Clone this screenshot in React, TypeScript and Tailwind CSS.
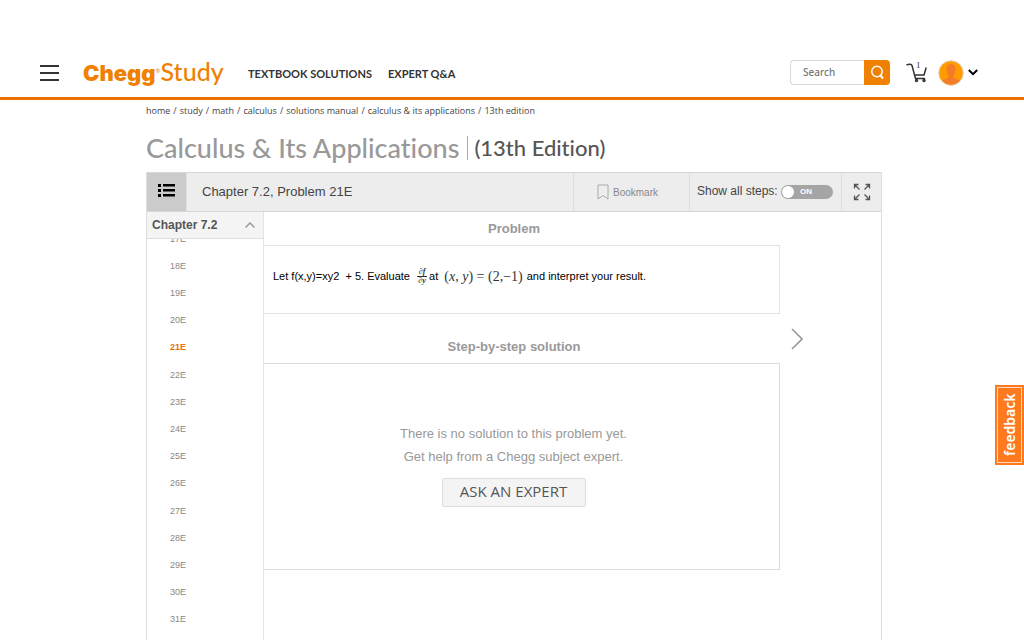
import React from "react";

const breadcrumbs = [
  "home",
  "study",
  "math",
  "calculus",
  "solutions manual",
  "calculus & its applications",
  "13th edition",
];

const problems = [
  "17E", "18E", "19E", "20E", "21E", "22E", "23E", "24E",
  "25E", "26E", "27E", "28E", "29E", "30E", "31E",
];

const CartIcon = () => (
  <svg width="22" height="20" viewBox="0 0 22 20" fill="none" stroke="#333" strokeWidth="1.5">
    <path d="M1 1.8C3 1 5.5 1 6 2.5L9.5 15.5H18.5M9 12H18L20 5" strokeLinejoin="round" strokeLinecap="round" />
    <circle cx="10.5" cy="17.5" r="1" />
    <circle cx="18" cy="17.5" r="1" />
  </svg>
);

const Avatar = () => (
  <svg width="26" height="26" viewBox="0 0 26 26">
    <circle cx="13" cy="13" r="12.3" fill="#ff9c00" stroke="#e3d3c0" strokeWidth="1" />
    <path
      d="M13 4C9.8 4 8.2 6.2 8.4 9.4C8.5 12 9.3 14.3 10.7 15.6V17.5C9.5 18.8 6 18.7 4 20.6A12 12 0 0 0 22 20.6C20 18.7 16.5 18.8 15.3 17.5V15.6C16.7 14.3 17.5 12 17.6 9.4C17.8 6.2 16.2 4 13 4Z"
      fill="#f47c28"
    />
  </svg>
);

const Header: React.FC = () => (
  <header className="flex h-[100px] shrink-0 items-center border-b-[3px] border-[#eb7100] pt-12 pr-[46px] pl-10 font-['Lato',sans-serif]">
    <button aria-label="Menu" className="mr-6">
      <svg width="19" height="18" viewBox="0 0 19 18" stroke="#333" strokeWidth="2">
        <path d="M0 2H19M0 9H19M0 16H19" />
      </svg>
    </button>
    <a href="#" className="flex w-[165px] items-baseline pb-0.5 leading-8 text-[#f08000]">
      <span className="font-['Inter',sans-serif] text-[22px] font-black">Chegg</span>
      <span className="self-start text-[6px]">®</span>
      <span className="text-[25px] font-medium">Study</span>
    </a>
    <nav className="flex gap-4 pt-1 text-[11px] font-bold whitespace-nowrap text-[#333]">
      <a href="#">TEXTBOOK SOLUTIONS</a>
      <a href="#">EXPERT Q&amp;A</a>
    </nav>
    <form className="ml-auto flex h-[25px]">
      <input
        aria-label="Search"
        placeholder="Search"
        className="w-[74px] rounded-l border border-r-0 border-[#d8d8d8] pl-3 font-['Noto_Sans',sans-serif] text-[10px] font-medium placeholder:text-[#777]"
      />
      <button type="button" aria-label="Submit search" className="flex w-[26px] items-center justify-center rounded-r bg-[#f08000]">
        <svg width="15" height="15" viewBox="0 0 15 15" fill="none" stroke="#fff" strokeWidth="1.5">
          <circle cx="7" cy="6.5" r="5.2" />
          <path d="M10.5 10.5L13 13.5" strokeWidth="2" />
        </svg>
      </button>
    </form>
    <a href="#" aria-label="Cart" className="relative ml-4">
      <CartIcon />
      <span className="absolute -top-1 left-2.5 font-['Liberation_Serif',serif] text-[9px] text-[#333]">1</span>
    </a>
    <button aria-label="Account" className="ml-2.5 flex items-center gap-1">
      <Avatar />
      <svg width="10" height="7" viewBox="0 0 10 7" fill="none" stroke="#000" strokeWidth="2">
        <path d="M0.8 1L5 5.2L9.2 1" />
      </svg>
    </button>
  </header>
);

const Toolbar: React.FC = () => (
  <div className="flex h-10 border-t border-b border-[#d6d6d6] bg-[#ededed] text-[#444]">
    <button aria-label="Problem list" className="flex w-10 items-center justify-center border-r border-[#e2e2e2] bg-[#cbcbcb] pb-1">
      <svg width="17" height="13" viewBox="0 0 17 13" fill="#000">
        <path d="M0 0h3v3H0zM5 0h12v2.5H5zM0 5h3v3H0zM5 5h12v2.5H5zM0 10h3v3H0zM5 10h12v2.5H5z" />
      </svg>
    </button>
    <h2 className="flex flex-1 items-center pl-[15px] text-[13px]">Chapter 7.2, Problem 21E</h2>
    <button className="flex w-[116px] items-center justify-center gap-1 border-l border-[#dedede] pr-2 text-[10px] text-[#888]">
      <svg width="12" height="16" viewBox="0 0 12 16" fill="none" stroke="#aaa">
        <path d="M1 1H11V15L6 11.5L1 15Z" />
      </svg>
      Bookmark
    </button>
    <div className="flex w-[152px] items-center justify-between border-l border-[#dedede] pr-2 pl-[7px]">
      <label htmlFor="steps" className="pb-0.5 text-xs leading-4 whitespace-nowrap">Show all steps:</label>
      <button
        id="steps"
        role="switch"
        aria-checked="true"
        className="flex h-3.5 w-[52px] items-center gap-1.5 rounded-full bg-[#a5a5a5] pl-px text-[8px] font-bold text-white"
      >
        <span className="size-3 rounded-full bg-white" />
        ON
      </button>
    </div>
    <button aria-label="Full screen" className="flex w-10 items-center justify-center border-l border-[#dedede]">
      <svg width="18" height="18" viewBox="0 0 18 18" fill="none" stroke="#555" strokeWidth="1.3">
        <path d="M1.5 5.5V1.5H5.5M1.5 1.5L6.5 6.5M12.5 1.5H16.5V5.5M16.5 1.5L11.5 6.5M1.5 12.5V16.5H5.5M1.5 16.5L6.5 11.5M12.5 16.5H16.5V12.5M16.5 16.5L11.5 11.5" />
      </svg>
    </button>
  </div>
);

const Sidebar: React.FC = () => (
  <aside className="flex w-[117px] shrink-0 flex-col border-r border-[#e4e4e4]">
    <button className="flex h-[27px] items-center justify-between border-b border-[#dedede] bg-[#f4f4f4] pr-2 pl-[5px] text-xs font-bold text-[#555]">
      Chapter 7.2
      <svg width="10" height="6" viewBox="0 0 10 6" fill="none" stroke="#999" strokeWidth="1.5">
        <path d="M0.5 5.5L5 1L9.5 5.5" />
      </svg>
    </button>
    <div className="h-0 flex-1 overflow-hidden">
      <ul className="-mt-3.5 grid h-[408px] items-center text-[9px] leading-4 text-[#888]">
        {problems.map((p) => (
          <li key={p} className="pl-[23px]">
            <a href="#" className={p === "21E" ? "font-bold text-[#eb7100]" : ""}>
              {p}
            </a>
          </li>
        ))}
      </ul>
    </div>
  </aside>
);

const Equation = () => (
  <span className="mr-1 font-['Liberation_Serif',serif] text-sm leading-4 text-[#333]">
    (<i>x</i>, <i>y</i>) = (2,−1)
  </span>
);

const Problem: React.FC = () => (
  <p className="flex h-[69px] items-center border border-l-0 border-[#e2e2e2] pb-1.5 pl-[9px] text-[11px] whitespace-pre text-black">
    Let f(x,y)=xy2  + 5. Evaluate{" "}
    <span className="mr-0.5 ml-1 inline-flex w-2.5 flex-col items-center font-['Liberation_Serif',serif] text-[8px] leading-2 font-bold text-[#333] italic">
      <span className="w-full border-b border-[#333] text-center">∂f</span>
      <span>∂y</span>
    </span>
    {"at  "}
    <Equation />
    and interpret your result.
  </p>
);

const App: React.FC = () => {
  return (
    <div className="flex h-screen flex-col overflow-hidden bg-white font-['Liberation_Sans',sans-serif]">
      <Header />
      <main className="flex flex-1 flex-col pl-1">
        <div className="mx-auto flex w-full max-w-[736px] flex-1 flex-col">
          <nav className="mt-[3px] flex gap-[3px] font-['Open_Sans',sans-serif] text-[9px] leading-4 text-[#444]">
            {breadcrumbs.map((b, i) => (
              <React.Fragment key={b}>
                {i > 0 && <span>/</span>}
                <a href="#">{b}</a>
              </React.Fragment>
            ))}
          </nav>
          <h1 className="mt-[13px] mb-2 flex h-8 items-center font-['Lato',sans-serif] text-[27px] font-medium text-[#999] [font-variant-ligatures:none]">
            Calculus &amp; Its Applications
            <span className="ml-2 border-l border-[#aaa] pl-1.5 text-[22px] leading-6 text-[#555]">(13th Edition)</span>
          </h1>
          <div className="flex flex-1 flex-col border-r border-l border-[#dedede]">
            <Toolbar />
            <div className="flex flex-1">
              <Sidebar />
              <div className="flex-1 text-[#999]">
                <h3 className="flex h-[33px] items-center justify-center pr-4 text-[13px] font-bold">Problem</h3>
                <Problem />
                <h3 className="flex h-[49px] items-center justify-center pt-4 pr-4 text-[13px] font-bold">
                  Step-by-step solution
                </h3>
                <div className="flex h-[207px] flex-col items-center border border-l-0 border-[#dcdcdc] pt-[58px] pr-4 text-[13px] leading-[23px]">
                  <p>There is no solution to this problem yet.</p>
                  <p>Get help from a Chegg subject expert.</p>
                  <button className="mt-2.5 h-[29px] w-36 rounded-xs border border-[#dedede] bg-[#f4f4f4] pb-0.5 font-['Open_Sans',sans-serif] text-[15px] text-[#555]">
                    ASK AN EXPERT
                  </button>
                </div>
              </div>
              <div className="w-[101px] shrink-0 pt-[116px] pl-[11px]">
                <button aria-label="Next problem">
                  <svg width="12" height="22" viewBox="0 0 12 22" fill="none" stroke="#999" strokeWidth="1.6">
                    <path d="M1 1L11 11L1 21" />
                  </svg>
                </button>
              </div>
            </div>
          </div>
        </div>
      </main>
      <button className="fixed top-[385px] right-0 flex h-20 w-[29px] items-center justify-center border border-[#ff7a1f] bg-[#ff7a1f] p-px">
        <span className="flex size-full rotate-180 items-center justify-center border border-[#ffd9bf] font-['Noto_Sans',sans-serif] text-sm font-semibold text-white [writing-mode:vertical-rl]">
          feedback
        </span>
      </button>
    </div>
  );
};

export default App;
